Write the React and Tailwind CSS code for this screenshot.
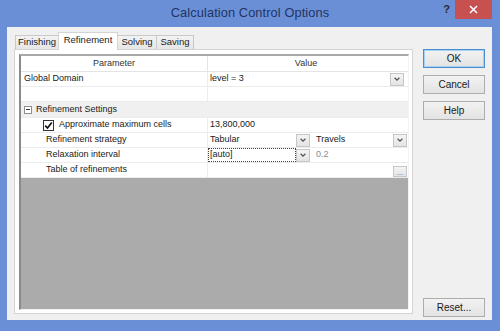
import React from "react";

function Chevron() {
  return (
    <svg width="8" height="8" viewBox="0 0 10 10">
      <path d="M2 3.5 L5 6.5 L8 3.5" fill="none" stroke="#555" strokeWidth="1.6" />
    </svg>
  );
}

function DropBtn({ className = "" }) {
  return (
    <div className={"w-[14px] h-[13px] flex items-center justify-center bg-gradient-to-b from-[#f4f4f4] to-[#e4e4e4] border border-[#c6c6c6] " + className}>
      <Chevron />
    </div>
  );
}

function Row({ left, right, h = "h-[15px]" }) {
  return (
    <div className={"flex " + h + " border-b border-[#ececec]"}>
      <div className="w-[187px] shrink-0 border-r border-[#ececec] flex items-center">{left}</div>
      <div className="flex-1 flex items-center min-w-0">{right}</div>
    </div>
  );
}

function Button({ children, def = false, className = "" }) {
  return (
    <div
      className={
        "w-[62px] h-[19px] flex items-center justify-center text-[10px] text-[#1a1a1a] bg-gradient-to-b from-[#f2f2f2] to-[#e3e3e3] border " +
        (def ? "border-[#4a90d0] shadow-[inset_0_0_0_1px_#a8d0f0]" : "border-[#adadad]") +
        " " +
        className
      }
    >
      {children}
    </div>
  );
}

export default function App() {
  return (
    <div className="w-[500px] h-[331px] bg-[#6b8fd6] flex flex-col overflow-hidden font-['Liberation_Sans',Arial,sans-serif] text-[#1a1a1a]">
      {/* title bar */}
      <div className="h-[27px] shrink-0 grid grid-cols-[1fr_auto_1fr]">
        <div />
        <div className="flex items-center pb-[1px] text-[12.8px] text-[#1f3563] tracking-[0.1px]">
          Calculation Control Options
        </div>
        <div className="flex justify-end items-start pr-[8px]">
          <div className="mt-[2px] mr-[5px] text-[11px] font-bold text-[#2a2a2a] leading-[14px]">?</div>
          <div className="w-[37px] h-[19px] bg-[#c75050] flex items-center justify-center">
            <svg width="9" height="9" viewBox="0 0 9 9">
              <path d="M1 1 L8 8 M8 1 L1 8" stroke="#fff" strokeWidth="1.5" />
            </svg>
          </div>
        </div>
      </div>

      {/* client area */}
      <div className="flex-1 ml-[7px] mr-[8px] mb-[11px] bg-[#f0f0f0] flex">
        {/* left: tabs and panel */}
        <div className="w-[399px] ml-[7px] pt-[5px] pb-[6px] flex flex-col">
          <div className="h-[17px] flex items-end pl-[1px] text-[9.5px]">
            <div className="w-[44px] h-[14px] flex items-center justify-center border border-b-0 border-[#c9c9c9] bg-gradient-to-b from-[#f3f3f3] to-[#e6e6e6]">
              Finishing
            </div>
            <div className="relative z-10 -ml-px w-[60px] h-[18px] -mb-px pb-[2px] flex items-center justify-center border border-b-0 border-[#d4d4d4] bg-white">
              Refinement
            </div>
            <div className="-ml-px w-[40px] h-[14px] flex items-center justify-center border border-b-0 border-[#c9c9c9] bg-gradient-to-b from-[#f3f3f3] to-[#e6e6e6]">
              Solving
            </div>
            <div className="-ml-px w-[38px] h-[14px] flex items-center justify-center border border-b-0 border-[#c9c9c9] bg-gradient-to-b from-[#f3f3f3] to-[#e6e6e6]">
              Saving
            </div>
          </div>
          <div className="flex-1 border border-[#d4d4d4] bg-white pt-[4px] pl-[4px] pr-[3px] pb-[3px] flex">
            <div className="flex-1 flex flex-col border-l-2 border-t-2 border-l-[#8a8a8a] border-t-[#a9a9a9] border-r border-b border-r-[#f4f4f4] border-b-[#f4f4f4] text-[9px] overflow-hidden">
              {/* header */}
              <div className="flex h-[16px] border-b border-[#e4e4e4] bg-white text-[#333]">
                <div className="w-[187px] shrink-0 border-r border-[#e4e4e4] flex items-center justify-center">Parameter</div>
                <div className="flex-1 flex items-center justify-center pr-[4px]">Value</div>
              </div>
              <Row
                left={<span className="pl-[3px]">Global Domain</span>}
                right={
                  <div className="flex-1 flex items-center justify-between pl-[2px] pr-[4px]">
                    <span>level = 3</span>
                    <DropBtn />
                  </div>
                }
              />
              <Row left={null} right={null} />
              <div className="flex h-[16px] bg-[#f0f0f0] border-b border-[#ececec] items-center">
                <div className="ml-[3px] w-[8px] h-[8px] border border-[#8f8f8f] bg-white flex items-center justify-center">
                  <div className="w-[4px] h-px bg-[#333]" />
                </div>
                <span className="ml-[4px]">Refinement Settings</span>
              </div>
              <Row
                left={
                  <div className="flex items-center pl-[22px]">
                    <div className="w-[11px] h-[11px] border border-[#333] bg-white flex items-center justify-center">
                      <svg width="9" height="9" viewBox="0 0 9 9">
                        <path d="M1.2 4.6 L3.5 7 L7.8 1.5" fill="none" stroke="#111" strokeWidth="1.7" />
                      </svg>
                    </div>
                    <span className="ml-[5px]">Approximate maximum cells</span>
                  </div>
                }
                right={<span className="pl-[2px]">13,800,000</span>}
              />
              <Row
                left={<span className="pl-[25px]">Refinement strategy</span>}
                right={
                  <div className="flex-1 flex items-center">
                    <span className="pl-[2px] w-[88px]">Tabular</span>
                    <DropBtn />
                    <span className="pl-[6px] flex-1">Travels</span>
                    <DropBtn className="mr-[1px]" />
                  </div>
                }
              />
              <Row
                left={<span className="pl-[25px]">Relaxation interval</span>}
                right={
                  <div className="flex-1 flex items-center h-full">
                    <div className="w-[88px] h-full border border-dotted border-[#444] flex items-center pl-[1px]">[auto]</div>
                    <DropBtn />
                    <span className="pl-[6px] text-[#8a8a8a]">0.2</span>
                  </div>
                }
              />
              <Row
                left={<span className="pl-[25px]">Table of refinements</span>}
                right={
                  <div className="flex-1 flex items-end justify-end h-full pr-[1px]">
                    <div className="w-[14px] h-[11px] bg-gradient-to-b from-[#f4f4f4] to-[#e4e4e4] border border-[#c6c6c6] flex items-end justify-center text-[7px] leading-[7px] text-[#555]">
                      ...
                    </div>
                  </div>
                }
              />
              <div className="flex-1 bg-[#ababab]" />
            </div>
          </div>
        </div>

        {/* right: buttons */}
        <div className="ml-[10px] pt-[22px] pb-[3px] flex flex-col gap-[7px]">
          <Button def>OK</Button>
          <Button>Cancel</Button>
          <Button>Help</Button>
          <Button className="mt-auto">Reset...</Button>
        </div>
      </div>
    </div>
  );
}
